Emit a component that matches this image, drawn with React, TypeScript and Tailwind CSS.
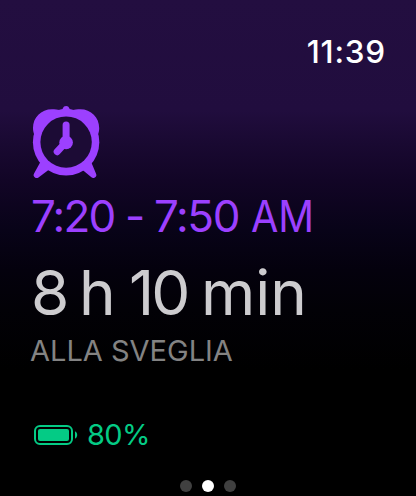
import type { SVGProps } from "react";

const PAGES = 3;
const ACTIVE_PAGE = 1;

function AlarmClock(props: SVGProps<SVGSVGElement>) {
  return (
    <svg viewBox="0 0 70 76" fill="none" {...props}>
      {/* bells and top button */}
      <path
        fill="currentColor"
        d="M31.800 4.600C32.300 2.900 33.600 2.100 35.100 2.100s2.800.8 3.300 2.500C39.300 6.200 42 6.200 45 5.600 58 3.200 68.200 12 68.200 24c0 2.800-.5 5-1.500 7.300L35.100 42 3.500 31.300C2.500 29 2 26.800 2 24 2 12 12.200 3.200 25.200 5.600c3 .6 5.700.6 6.600-1Z"
      />
      {/* feet */}
      <path
        stroke="currentColor"
        strokeWidth="6"
        strokeLinecap="round"
        strokeLinejoin="round"
        d="M12 59.500 5.700 71 17 62.500ZM57.500 59.500 62.300 71 52 62.500Z"
      />
      <circle cx="35.100" cy="38.300" r="33.200" fill="currentColor" />
      <circle cx="35.100" cy="38.100" r="25.700" fill="#1c0b35" />
      {/* hands */}
      <path
        stroke="currentColor"
        strokeWidth="7"
        strokeLinecap="round"
        strokeLinejoin="round"
        d="M35.100 21V38L26.200 47.700"
      />
      <circle cx="35.100" cy="38.500" r="6.800" fill="currentColor" />
    </svg>
  );
}

function Battery(props: SVGProps<SVGSVGElement>) {
  return (
    <svg viewBox="0 0 46 22" fill="none" {...props}>
      <rect x="2" y="2" width="37" height="18" rx="5" stroke="currentColor" strokeWidth="2" />
      <rect x="5" y="5" width="31" height="12" rx="2" fill="currentColor" />
      <path d="M42 7.300c2.900 1.300 2.900 6.100 0 7.400Z" fill="currentColor" />
    </svg>
  );
}

export default function App() {
  return (
    <main className="flex h-[496px] w-[416px] flex-col overflow-hidden whitespace-nowrap bg-black bg-[linear-gradient(180deg,#230e40_0px,#210d3e_110px,#190931_145px,#120526_180px,#080318_230px,#04010d_270px,#020106_310px,#000_370px)] font-['Inter',sans-serif]">
      <header className="flex h-[104px] justify-end pt-[32px] pr-[30px]">
        <time className="text-[31.5px] leading-[40px] font-medium tracking-[0.8px] text-white">11:39</time>
      </header>

      <section className="flex flex-col pl-[31px]">
        <AlarmClock className="h-[76px] w-[70px] text-[#9c40ff]" />
        <p className="mt-[10px] flex text-[44px] leading-[52px] font-normal text-[#9c40ff]">
          <span className="w-[94px] tracking-[-1.8px]">7:20</span>
          <span className="w-[29px]">-</span>
          <span className="w-[97px] tracking-[-1.4px]">7:50</span>
          <span className="origin-left scale-x-[0.9]">AM</span>
        </p>
        <h1 className="mt-[15px] flex text-[62px] leading-[72px] text-[#cdcccf]">
          <span className="w-[48px]">8</span>
          <span className="w-[50px]">h</span>
          <span className="w-[72px] tracking-[-3px]">10</span>
          <span>min</span>
        </h1>
        <p className="mt-[4px] -ml-px text-[29px] leading-[36px] text-[#838383]">ALLA SVEGLIA</p>
        <div className="mt-[48px] ml-[2px] flex h-[36px] items-center gap-[8px] text-[#04cb85]">
          <Battery className="h-[22px] w-[46px]" />
          <span className="text-[29px] leading-[36px] tracking-[-0.6px]">80%</span>
        </div>
      </section>

      <nav className="mt-auto flex justify-center gap-[10px] pb-[4px]">
        {Array.from({ length: PAGES }, (_, i) => (
          <span
            key={i}
            className={
              i === ACTIVE_PAGE
                ? "size-[12px] rounded-full bg-white"
                : "size-[12px] rounded-full bg-[#404040]"
            }
          />
        ))}
      </nav>
    </main>
  );
}
